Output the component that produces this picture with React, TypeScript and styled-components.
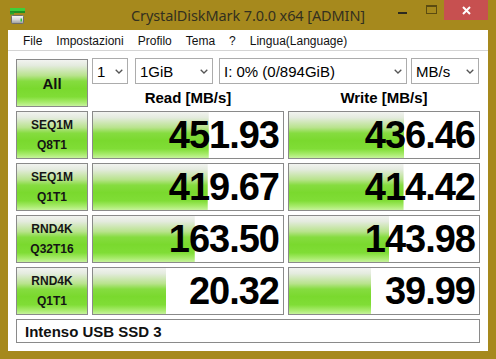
import { Fragment } from 'react'
import styled, { createGlobalStyle } from 'styled-components'

const GlobalStyle = createGlobalStyle`
  html, body {
    margin: 0;
    padding: 0;
    background: #a6891d;
  }
  body {
    font-family: "Liberation Sans", Arial, sans-serif;
  }
`

type Row = { line1: string; line2: string; read: number; write: number }

const rows: Row[] = [
  { line1: 'SEQ1M', line2: 'Q8T1', read: 451.93, write: 436.46 },
  { line1: 'SEQ1M', line2: 'Q1T1', read: 419.67, write: 414.42 },
  { line1: 'RND4K', line2: 'Q32T16', read: 163.5, write: 143.98 },
  { line1: 'RND4K', line2: 'Q1T1', read: 20.32, write: 39.99 },
]

const menu = ['File', 'Impostazioni', 'Profilo', 'Tema', '?', 'Lingua(Language)']

const selects = [
  { text: '1', w: 36, ml: 0 },
  { text: '1GiB', w: 78, ml: 7 },
  { text: 'I: 0% (0/894GiB)', w: 188, ml: 6 },
  { text: 'MB/s', w: 68, ml: 4 },
]

// bar length on a log scale, 0.1 .. 100000 MB/s
const fillPct = (v: number) => Math.max(0, Math.min(100, ((Math.log10(v) + 1) / 6) * 100))

const AppIcon = () => (
  <svg width="16" height="17" viewBox="0 0 16 17">
    <defs>
      <linearGradient id="drv" x1="0" y1="0" x2="0" y2="1">
        <stop offset="0" stopColor="#fafafa" />
        <stop offset="0.5" stopColor="#d8d8d8" />
        <stop offset="1" stopColor="#9a9a9a" />
      </linearGradient>
    </defs>
    <rect x="0" y="0" width="15" height="3.5" fill="#3fcf3a" />
    <rect x="0" y="3" width="15" height="2" fill="#1f8f24" />
    <rect x="0" y="4.5" width="4" height="2" fill="#2aa82c" />
    <rect x="1.5" y="7.5" width="12" height="8" rx="1" fill="url(#drv)" stroke="#6e6e6e" />
    <rect x="10.5" y="10.5" width="1.5" height="3" fill="#2ec43a" />
  </svg>
)

const Chevron = () => (
  <svg width="8" height="5" viewBox="0 0 8 5">
    <polyline points="0.7,0.7 4,4 7.3,0.7" fill="none" stroke="#555" strokeWidth="1.3" />
  </svg>
)

const App = () => {
  return (
    <>
      <GlobalStyle />
      <Window>
        <TitleBar>
          <IconSlot>
            <AppIcon />
          </IconSlot>
          <Title>CrystalDiskMark 7.0.0 x64 [ADMIN]</Title>
          <Controls>
            <CtrlButton>
              <MinGlyph />
            </CtrlButton>
            <CtrlButton>
              <MaxGlyph />
            </CtrlButton>
            <CloseButton>
              <svg width="9" height="9" viewBox="0 0 9 9">
                <path d="M1 1 L8 8 M8 1 L1 8" stroke="#fff" strokeWidth="2" />
              </svg>
            </CloseButton>
          </Controls>
        </TitleBar>

        <Client>
          <MenuBar>
            {menu.map((m) => (
              <MenuItem key={m}>{m}</MenuItem>
            ))}
          </MenuBar>

          <Board>
            <AllButton>All</AllButton>
            <TopPanel>
              <SelectRow>
                {selects.map((s) => (
                  <Select key={s.text} $w={s.w} $ml={s.ml}>
                    <span>{s.text}</span>
                    <Chevron />
                  </Select>
                ))}
              </SelectRow>
              <HeaderRow>
                <ColumnTitle>Read [MB/s]</ColumnTitle>
                <ColumnTitle>Write [MB/s]</ColumnTitle>
              </HeaderRow>
            </TopPanel>

            {rows.map((r) => (
              <Fragment key={r.line1 + r.line2}>
                <LabelCell>
                  <span>{r.line1}</span>
                  <span>{r.line2}</span>
                </LabelCell>
                <ValueCell style={{ backgroundSize: `${fillPct(r.read)}% 100%` }}>
                  {r.read.toFixed(2)}
                </ValueCell>
                <ValueCell style={{ backgroundSize: `${fillPct(r.write)}% 100%` }}>
                  {r.write.toFixed(2)}
                </ValueCell>
              </Fragment>
            ))}

            <DeviceBar>Intenso USB SSD 3</DeviceBar>
          </Board>
        </Client>
      </Window>
    </>
  )
}

const greenGradient = `linear-gradient(
  to bottom,
  #f2f3f0 0%,
  #e4ebde 12%,
  #b8e38c 34%,
  #86dc40 46%,
  #7ad92e 62%,
  #80dd36 80%,
  #a8eb6c 92%,
  #c6f39c 100%
)`

const Window = styled.div`
  width: 496px;
  height: 359px;
  background: #a6891d;
  display: flex;
  flex-direction: column;
  overflow: hidden;
`

const TitleBar = styled.div`
  height: 30px;
  display: grid;
  grid-template-columns: 1fr auto 1fr;
  align-items: center;
`

const IconSlot = styled.div`
  padding-left: 10px;
  padding-top: 2px;
  display: flex;
`

const Title = styled.div`
  font-family: "Noto Sans", "Open Sans", sans-serif;
  font-size: 14.5px;
  color: #33301f;
  white-space: nowrap;
  letter-spacing: -0.1px;
`

const Controls = styled.div`
  justify-self: end;
  align-self: start;
  display: flex;
  margin-right: 8px;
`

const CtrlButton = styled.div`
  width: 26px;
  height: 20px;
  display: flex;
  align-items: center;
  justify-content: center;
`

const MinGlyph = styled.div`
  width: 9px;
  height: 2px;
  margin-top: 6px;
  margin-right: 5px;
  background: #2b2a20;
`

const MaxGlyph = styled.div`
  width: 9px;
  height: 6px;
  border: 1px solid #5b4b10;
  border-top-width: 2px;
  margin-top: -2px;
`

const CloseButton = styled.div`
  width: 44px;
  height: 20px;
  background: #c75050;
  display: flex;
  align-items: center;
  justify-content: center;
`

const Client = styled.div`
  flex: 1;
  margin: 0 8px 8px;
  background: #fff;
  display: flex;
  flex-direction: column;
`

const MenuBar = styled.div`
  height: 20px;
  padding-left: 8px;
  display: flex;
  align-items: center;
  border-bottom: 1px solid #d4d4d4;
  background: #fff;
`

const MenuItem = styled.span`
  padding: 0 7px;
  font-size: 12px;
  color: #111;
  margin-top: 1px;
`

const Board = styled.div`
  padding: 8px 8px 0;
  display: grid;
  grid-template-columns: 72px 192px 192px;
  grid-template-rows: repeat(5, 48px) 24px;
  gap: 4px;
`

const AllButton = styled.div`
  box-sizing: border-box;
  border: 1px solid #8a8a8a;
  background: ${greenGradient};
  display: flex;
  align-items: center;
  justify-content: center;
  font-size: 15px;
  font-weight: bold;
  color: #111;
`

const TopPanel = styled.div`
  grid-column: 2 / 4;
  margin-top: -1px;
  display: grid;
  grid-template-rows: 26px 1fr;
`

const SelectRow = styled.div`
  display: flex;
`

const Select = styled.div<{ $w: number; $ml: number }>`
  box-sizing: border-box;
  width: ${({ $w }) => $w}px;
  margin-left: ${({ $ml }) => $ml}px;
  border: 1px solid #acacac;
  background: #fff;
  display: flex;
  align-items: center;
  justify-content: space-between;
  padding: 1px 4px 0 4px;
  font-size: 15px;
  color: #000;
  white-space: nowrap;
  overflow: hidden;
`

const HeaderRow = styled.div`
  display: grid;
  grid-template-columns: 192px 192px;
  column-gap: 4px;
  align-items: end;
`

const ColumnTitle = styled.div`
  text-align: center;
  font-size: 15px;
  line-height: 18px;
  font-weight: bold;
  color: #000;
`

const LabelCell = styled.div`
  box-sizing: border-box;
  border: 1px solid #8a8a8a;
  background: ${greenGradient};
  display: flex;
  flex-direction: column;
  align-items: center;
  justify-content: center;
  font-size: 12px;
  line-height: 20px;
  font-weight: bold;
  color: #151515;
`

const ValueCell = styled.div`
  box-sizing: border-box;
  border: 1px solid #8a8a8a;
  background-color: #fff;
  background-image: ${greenGradient};
  background-repeat: no-repeat;
  display: flex;
  align-items: center;
  justify-content: flex-end;
  padding-right: 4px;
  font-size: 38px;
  font-weight: bold;
  letter-spacing: -1px;
  color: #000;
`

const DeviceBar = styled.div`
  grid-column: 1 / 4;
  box-sizing: border-box;
  border: 1px solid #8a8a8a;
  display: flex;
  align-items: center;
  padding-left: 8px;
  font-size: 15px;
  font-weight: bold;
  color: #111;
`

export default App
